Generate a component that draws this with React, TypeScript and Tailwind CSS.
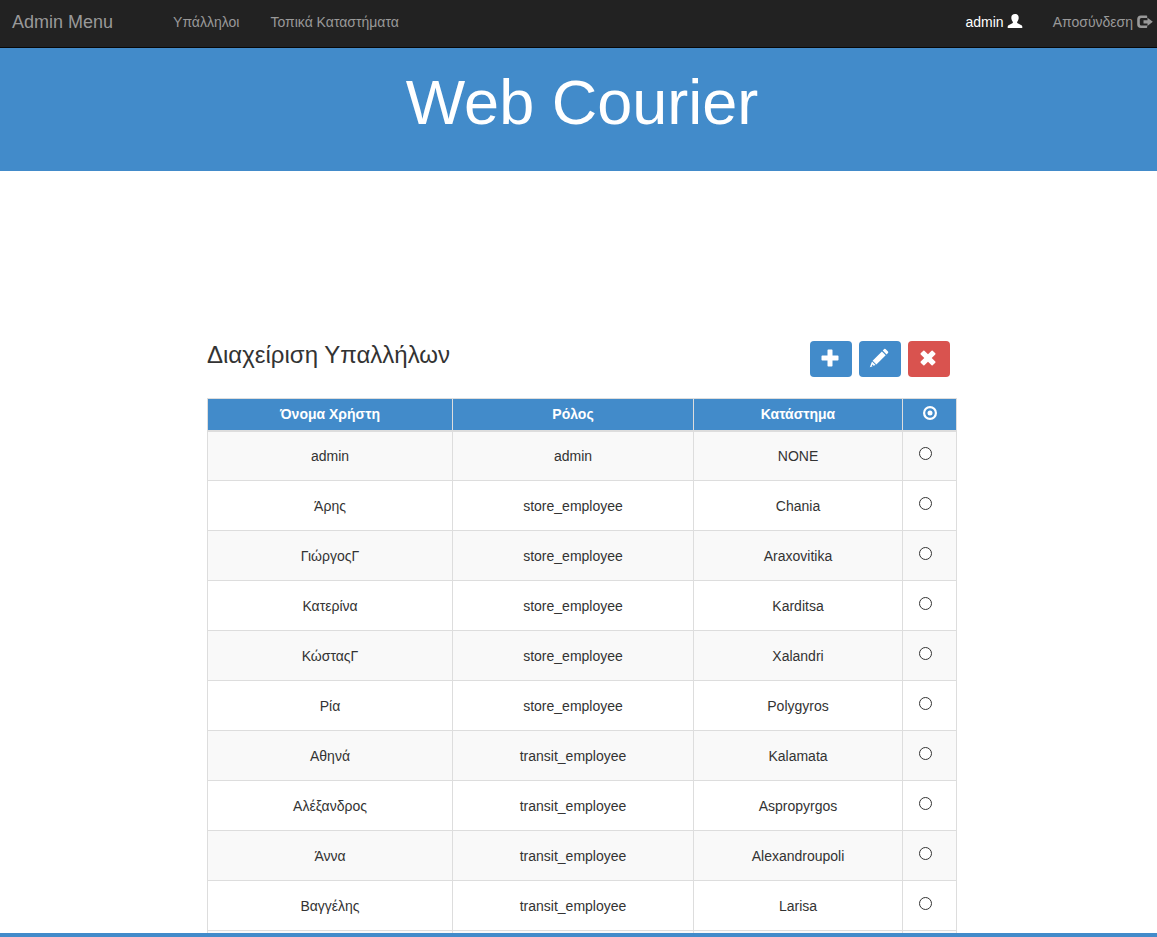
import React from "react";

type Employee = { name: string; role: string; store: string };

const employees: Employee[] = [
  { name: "admin", role: "admin", store: "NONE" },
  { name: "Άρης", role: "store_employee", store: "Chania" },
  { name: "ΓιώργοςΓ", role: "store_employee", store: "Araxovitika" },
  { name: "Κατερίνα", role: "store_employee", store: "Karditsa" },
  { name: "ΚώσταςΓ", role: "store_employee", store: "Xalandri" },
  { name: "Ρία", role: "store_employee", store: "Polygyros" },
  { name: "Αθηνά", role: "transit_employee", store: "Kalamata" },
  { name: "Αλέξανδρος", role: "transit_employee", store: "Aspropyrgos" },
  { name: "Άννα", role: "transit_employee", store: "Alexandroupoli" },
  { name: "Βαγγέλης", role: "transit_employee", store: "Larisa" },
];

function UserIcon() {
  return (
    <svg viewBox="0 0 16 16" className="mb-0.5 size-4 fill-current" aria-hidden="true">
      <path d="M8 1C5.700 1 4.300 2.300 4.300 4.700c0 1.500.5 2.800 1.400 4 .4.500.3 1.200-.3 1.500L2 11.900c-.8.400-1.300.900-1.300 1.700V15h14.600v-1.400c0-.8-.5-1.300-1.300-1.700l-3.400-1.700c-.6-.3-.7-1-.3-1.500.9-1.200 1.400-2.500 1.400-4C11.700 2.300 10.300 1 8 1z" />
    </svg>
  );
}

function LogOutIcon() {
  return (
    <svg viewBox="0 0 16 16" className="size-4 fill-current" aria-hidden="true">
      <path d="M9.500 1.500H4A3.800 3.800 0 0 0 .2 5.300v4.900A3.800 3.800 0 0 0 4 14h5.500a.7.700 0 0 0 .7-.7v-1.700H4.300A1.500 1.500 0 0 1 2.800 10.100V5.400A1.500 1.500 0 0 1 4.300 3.900h5.900V2.200a.7.700 0 0 0-.7-.7z" />
      <path d="M10.500 3.700 15.800 7.800l-5.300 4.100V9.400H6.500V6.200h4z" />
    </svg>
  );
}

function PlusIcon() {
  return (
    <svg viewBox="0 0 18 18" className="size-[18px] fill-current" aria-hidden="true">
      <path d="M7.300 0.500h3.400a.8.800 0 0 1 .8.800v5.200h5.200a.8.800 0 0 1 .8.800v3.400a.8.800 0 0 1-.8.800h-5.200v5.200a.8.800 0 0 1-.8.800H7.300a.8.800 0 0 1-.8-.8v-5.200H1.300a.8.800 0 0 1-.8-.8V7.300a.8.800 0 0 1 .8-.8h5.200V1.300a.8.800 0 0 1 .8-.8z" />
    </svg>
  );
}

function PencilIcon() {
  return (
    <svg viewBox="0 0 20 20" className="size-5 fill-current" aria-hidden="true">
      <path d="M15.200 1.100a.9.900 0 0 1 1.300 0l2.500 2.500a.9.900 0 0 1 0 1.300l-1.500 1.500-3.800-3.800zM12.900 3.400l3.800 3.800-9.300 9.300-3.800-3.800zM3 13.400l3.600 3.600-2 .8-1.200-1.200-.6.700.9.900-2.900 1z" />
    </svg>
  );
}

function RemoveIcon() {
  return (
    <svg viewBox="0 0 18 18" className="size-[18px] fill-current" aria-hidden="true">
      <path d="M5.400 1.700 9 5.300l3.600-3.600a.8.800 0 0 1 1.100 0l2.600 2.600a.8.800 0 0 1 0 1.100L12.700 9l3.600 3.600a.8.800 0 0 1 0 1.100l-2.600 2.600a.8.800 0 0 1-1.100 0L9 12.700l-3.600 3.600a.8.800 0 0 1-1.100 0l-2.600-2.600a.8.800 0 0 1 0-1.100L5.300 9 1.700 5.400a.8.800 0 0 1 0-1.100l2.600-2.600a.8.800 0 0 1 1.100 0z" />
    </svg>
  );
}

function RecordIcon() {
  return (
    <svg viewBox="0 0 14 14" className="mx-auto mb-0.5 size-[14px]" role="img" aria-label="Επιλογή">
      <circle cx="7" cy="7" r="5.900" fill="none" stroke="currentColor" strokeWidth="2.200" />
      <circle cx="7" cy="7" r="2.500" fill="currentColor" />
    </svg>
  );
}

const heading = "border border-[#ddd] border-b-2 px-2 font-bold";
const cell = "border border-[#ddd] px-2";
const button = "flex h-9 w-[42px] items-center justify-center rounded pr-0.5 pb-0.5 text-white";

export default function App() {
  return (
    <div className="flex h-screen flex-col overflow-hidden bg-white font-['Liberation_Sans',Arial,sans-serif] text-sm leading-5 text-[#333]">
      <nav className="flex h-12 shrink-0 items-center border-b border-[#080808] bg-[#222] pr-1 pb-1 pl-3 text-[#999]">
        <a href="#" className="text-lg">Admin Menu</a>
        <div className="ml-[60px] flex gap-[31px]">
          <a href="#employees">Υπάλληλοι</a>
          <a href="#stores">Τοπικά Καταστήματα</a>
        </div>
        <div className="ml-auto flex gap-[30px]">
          <a href="#profile" className="flex items-center gap-[3px] text-white">
            admin
            <UserIcon />
          </a>
          <a href="#logout" className="flex items-center gap-1">
            Αποσύνδεση
            <LogOutIcon />
          </a>
        </div>
      </nav>

      <header className="shrink-0 bg-[#428bca] pt-5 pb-[34px] pl-[7px] text-center text-white">
        <h1 className="text-[63px] leading-[69px]">Web Courier</h1>
      </header>

      <main className="min-h-0 flex-1 overflow-hidden pt-[170px] pl-[7px]">
        <div className="mx-auto w-full max-w-[750px]">
          <div className="flex items-start justify-between pr-[7px]">
            <h2 className="text-2xl leading-7">Διαχείριση Υπαλλήλων</h2>
            <div className="flex gap-[7px]">
              <button type="button" aria-label="Προσθήκη" className={`${button} bg-[#428bca]`}>
                <PlusIcon />
              </button>
              <button type="button" aria-label="Επεξεργασία" className={`${button} bg-[#428bca]`}>
                <PencilIcon />
              </button>
              <button type="button" aria-label="Διαγραφή" className={`${button} bg-[#d9534f]`}>
                <RemoveIcon />
              </button>
            </div>
          </div>

          <table className="mt-[21px] w-full table-fixed border-collapse text-center">
            <colgroup>
              <col />
              <col className="w-[241px]" />
              <col className="w-[209px]" />
              <col className="w-[54px]" />
            </colgroup>
            <thead className="bg-[#428bca] text-white">
              <tr className="h-8">
                <th className={heading}>Όνομα Χρήστη</th>
                <th className={heading}>Ρόλος</th>
                <th className={heading}>Κατάστημα</th>
                <th className={heading}>
                  <RecordIcon />
                </th>
              </tr>
            </thead>
            <tbody>
              {employees.map((e) => (
                <tr key={e.name} className="h-[50px] odd:bg-[#f9f9f9]">
                  <td className={cell}>{e.name}</td>
                  <td className={cell}>{e.role}</td>
                  <td className={cell}>{e.store}</td>
                  <td className="border border-[#ddd] pr-4 pl-2">
                    <input
                      type="radio"
                      name="employee"
                      aria-label={e.name}
                      className="mx-auto mb-1 block size-[13px] appearance-none rounded-full border border-[#333] bg-white checked:border-4"
                    />
                  </td>
                </tr>
              ))}
              <tr className="h-[50px] odd:bg-[#f9f9f9]" aria-hidden="true">
                <td className={cell} />
                <td className={cell} />
                <td className={cell} />
                <td className={cell} />
              </tr>
            </tbody>
          </table>
        </div>
      </main>

      <footer className="h-1 shrink-0 bg-[#428bca]" />
    </div>
  );
}
